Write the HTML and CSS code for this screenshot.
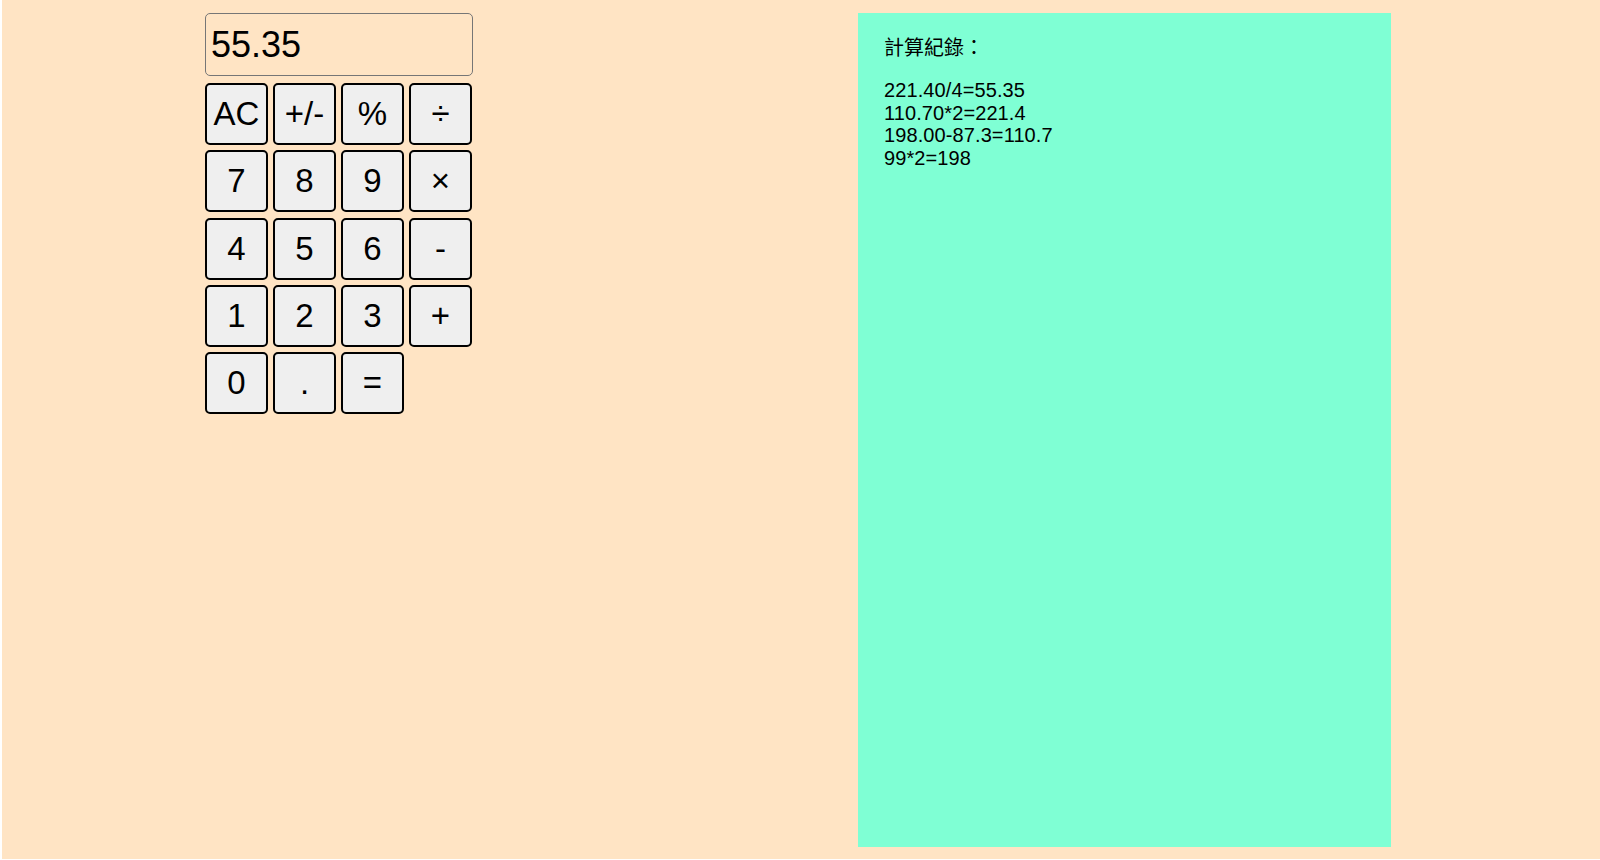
FILE: index.html
```html
<!DOCTYPE html>
<html lang="zh-Hant">
<head>
<meta charset="utf-8">
<title>計算機</title>
<link rel="stylesheet" href="styles.css">
</head>
<body>
<div class="page">
  <div class="calc">
    <div class="display">55.35</div>
    <div class="keys">
      <button class="key">AC</button>
      <button class="key">+/-</button>
      <button class="key">%</button>
      <button class="key">÷</button>
      <button class="key">7</button>
      <button class="key">8</button>
      <button class="key">9</button>
      <button class="key">×</button>
      <button class="key">4</button>
      <button class="key">5</button>
      <button class="key">6</button>
      <button class="key">-</button>
      <button class="key">1</button>
      <button class="key">2</button>
      <button class="key">3</button>
      <button class="key">+</button>
      <button class="key">0</button>
      <button class="key">.</button>
      <button class="key">=</button>
    </div>
  </div>
  <div class="history">
    <div class="history-title">計算紀錄：</div>
    <div class="history-list">
      <div>221.40/4=55.35</div>
      <div>110.70*2=221.4</div>
      <div>198.00-87.3=110.7</div>
      <div>99*2=198</div>
    </div>
  </div>
</div>
</body>
</html>
```

FILE: styles.css
```css
html {
  background: #ffffff;
  height: 100%;
}
body {
  margin: 0 0 1px 2px;
  height: calc(100% - 1px);
  background: #ffe4c4;
  font-family: "Liberation Sans", Arial, "Noto Sans CJK TC", sans-serif;
  color: #000;
  overflow: hidden;
}
.page {
  display: flex;
  align-items: flex-start;
  padding: 13px 0 0 203px;
}
.calc {
  width: 268px;
  display: flex;
  flex-direction: column;
  gap: 7px;
}
.display {
  box-sizing: border-box;
  height: 63px;
  border: 1px solid #767676;
  border-radius: 5px;
  background: #ffe4c4;
  font-size: 36px;
  line-height: 61px;
  padding-left: 5px;
  color: #000;
}
.keys {
  display: grid;
  grid-template-columns: repeat(4, 63px);
  grid-auto-rows: 62px;
  column-gap: 5px;
  row-gap: 5.3px;
}
.key {
  box-sizing: border-box;
  margin: 0;
  padding: 0;
  border: 2px solid #000;
  border-radius: 5px;
  background: #efefef;
  font-family: "Liberation Sans", Arial, sans-serif;
  font-size: 33px;
  color: #000;
  overflow: visible;
  white-space: nowrap;
}
.history {
  box-sizing: border-box;
  margin-left: 385px;
  width: 533px;
  height: 834px;
  background: #7fffd4;
  padding: 24px 26px;
  font-size: 20px;
  line-height: 22.5px;
}
.history-title {
  font-family: "Liberation Sans", Arial, "Noto Sans CJK TC", sans-serif;
  margin-bottom: 19.5px;
}
.history-list {
  letter-spacing: 0.1px;
}
```
